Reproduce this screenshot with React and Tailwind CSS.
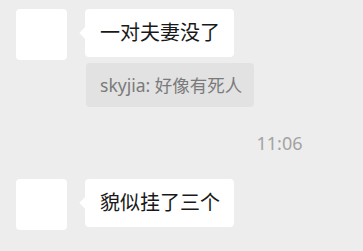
const font = { fontFamily: '"Noto Sans", "Noto Sans CJK SC", sans-serif' }

function Avatar() {
  return <div className="w-[51px] h-[51px] rounded-[4px] bg-white shrink-0" />
}

function Bubble({ children }) {
  return (
    <div className="relative ml-[18px] h-[48px] flex items-center bg-white rounded-[4px] pl-[15px] pr-[14px] text-[20px] text-[#191919]">
      <span className="absolute left-[-4px] top-[20px] w-[8px] h-[8px] bg-white rotate-45" />
      <span className="relative">{children}</span>
    </div>
  )
}

export default function App() {
  return (
    <div className="w-[363px] h-[251px] bg-[#ededed] overflow-hidden pl-[16px] pt-[9px]" style={font}>
      <div className="flex items-start">
        <Avatar />
        <Bubble>一对夫妻没了</Bubble>
      </div>
      <div className="ml-[70px] mt-[3px] flex w-fit h-[44px] items-center rounded-[4px] bg-[#e2e2e2] pl-[14px] pr-[12px] text-[17.5px] text-[#7a7a7a]">
        skyjia: 好像有死人
      </div>
      <div className="h-[72px] flex items-center justify-center pl-[180px] text-[18px] text-[#a3a3a3]">
        11:06
      </div>
      <div className="flex items-start">
        <Avatar />
        <Bubble>貌似挂了三个</Bubble>
      </div>
    </div>
  )
}
